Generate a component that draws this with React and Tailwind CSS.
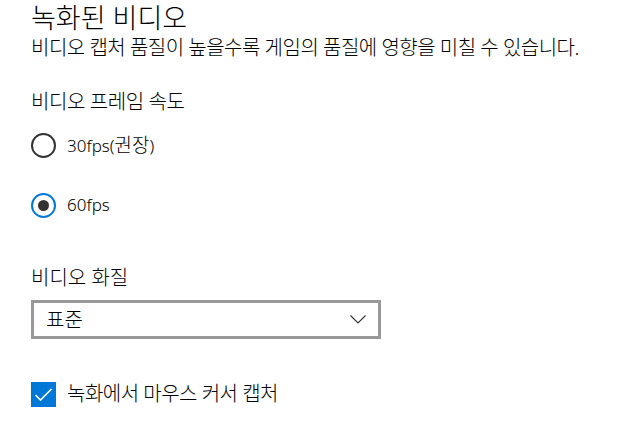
import React, { useState } from "react";

const font = { fontFamily: '"Noto Sans", "Noto Sans CJK KR", sans-serif' };

function Radio({ checked, latin, hangul, onClick }) {
  return (
    <button type="button" onClick={onClick} className="flex items-center h-[24px] text-left">
      {checked ? (
        <span className="w-[25px] h-[25px] rounded-full border-[2.5px] border-[#0078d7] flex items-center justify-center">
          <span className="w-[11px] h-[11px] rounded-full bg-[#333]" />
        </span>
      ) : (
        <span className="w-[25px] h-[25px] rounded-full border-[2.5px] border-[#333]" />
      )}
      <span className="ml-[11px] text-[17px] leading-[24px] text-black font-light">
        {latin}
        {hangul && (
          <>
            (<span className="text-[19px]">{hangul}</span>)
          </>
        )}
      </span>
    </button>
  );
}

export default function App() {
  const [fps, setFps] = useState(60);
  const [mouse, setMouse] = useState(true);

  return (
    <div className="w-[627px] h-[423px] bg-white overflow-hidden pl-[31px] font-light" style={font}>
      <h1 className="h-[36px] text-[27px] leading-[36px] text-black">녹화된 비디오</h1>
      <p className="h-[24px] text-[20px] leading-[24px] text-black tracking-[-0.5px]">
        비디오 캡처 품질이 높을수록 게임의 품질에 영향을 미칠 수 있습니다.
      </p>

      <p className="mt-[30px] h-[24px] text-[20px] leading-[24px] text-black tracking-[-0.4px]">비디오 프레임 속도</p>

      <div className="mt-[19px] flex flex-col gap-[36px]">
        <Radio checked={fps === 30} latin="30fps" hangul="권장" onClick={() => setFps(30)} />
        <Radio checked={fps === 60} latin="60fps" onClick={() => setFps(60)} />
      </div>

      <p className="mt-[49px] h-[24px] text-[20px] leading-[24px] text-black">비디오 화질</p>

      <div className="mt-[10px] w-[350px] h-[39px] border-[3px] border-[#999] flex items-center justify-between pl-[12px] pr-[12px]">
        <span className="text-[20px] leading-[24px] text-black">표준</span>
        <svg width="16" height="9" viewBox="0 0 16 9" fill="none">
          <path d="M0.5 0.5 L8 8 L15.5 0.5" stroke="#333" strokeWidth="1.1" />
        </svg>
      </div>

      <button type="button" onClick={() => setMouse(!mouse)} className="mt-[43px] flex items-center h-[24px]">
        <span className={mouse ? "w-[25px] h-[25px] bg-[#0078d7] flex items-center justify-center" : "w-[25px] h-[25px] border-[2.5px] border-[#333]"}>
          {mouse && (
            <svg width="19" height="15" viewBox="0 0 19 15" fill="none">
              <path d="M1.5 8 L6.5 13 L17.5 2" stroke="white" strokeWidth="1.6" />
            </svg>
          )}
        </span>
        <span className="ml-[11px] text-[20px] leading-[24px] text-black tracking-[-0.5px]">녹화에서 마우스 커서 캡처</span>
      </button>
    </div>
  );
}
